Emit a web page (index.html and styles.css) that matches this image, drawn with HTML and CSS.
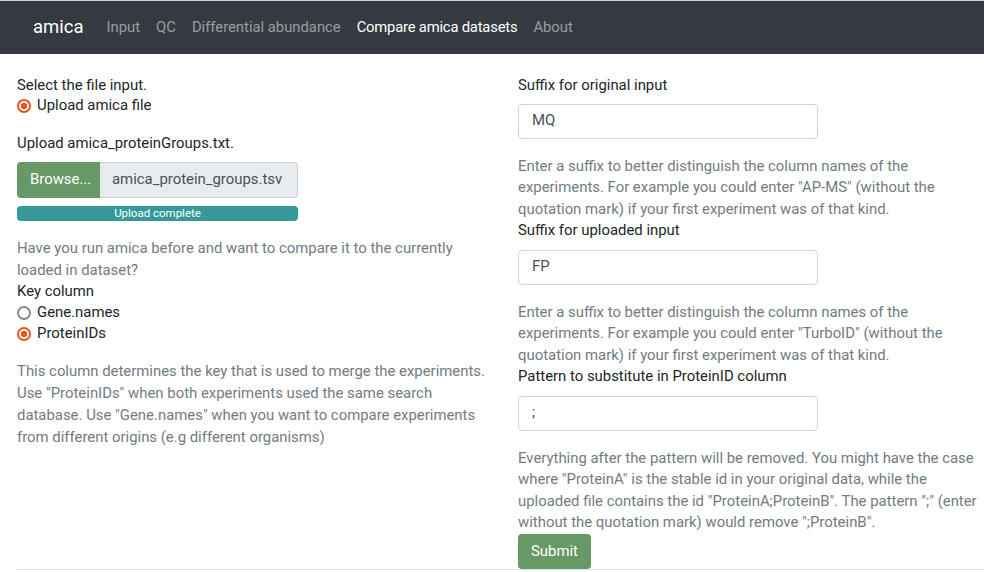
FILE: index.html
```html
<!DOCTYPE html>
<html lang="en">
<head>
<meta charset="utf-8">
<title>amica</title>
<link rel="stylesheet" href="styles.css">
</head>
<body>
<nav class="navbar">
  <span class="brand">amica</span>
  <ul class="nav">
    <li><a>Input</a></li>
    <li><a>QC</a></li>
    <li><a>Differential abundance</a></li>
    <li><a class="active">Compare amica datasets</a></li>
    <li><a>About</a></li>
  </ul>
</nav>
<main class="page">
  <section class="col col-left">
    <div class="group">
      <div class="label">Select the file input.</div>
      <label class="radio first"><span class="dot checked"></span>Upload amica file</label>
    </div>
    <div class="group">
      <div class="label gap">Upload amica_proteinGroups.txt.</div>
      <div class="file-input">
        <span class="browse">Browse...</span>
        <span class="filename">amica_protein_groups.tsv</span>
      </div>
      <div class="progress">Upload complete</div>
    </div>
    <p class="help">Have you run amica before and want to compare it to the currently loaded in dataset?</p>
    <div class="group key">
      <div class="label">Key column</div>
      <label class="radio first"><span class="dot"></span>Gene.names</label>
      <label class="radio"><span class="dot checked"></span>ProteinIDs</label>
    </div>
    <p class="help">This column determines the key that is used to merge the experiments. Use "ProteinIDs" when both experiments used the same search database. Use "Gene.names" when you want to compare experiments from different origins (e.g different organisms)</p>
  </section>
  <section class="col col-right">
    <div class="label gap">Suffix for original input</div>
    <div class="text-input">MQ</div>
    <p class="help">Enter a suffix to better distinguish the column names of the experiments. For example you could enter "AP-MS" (without the quotation mark) if your first experiment was of that kind.</p>
    <div class="label gap">Suffix for uploaded input</div>
    <div class="text-input">FP</div>
    <p class="help">Enter a suffix to better distinguish the column names of the experiments. For example you could enter "TurboID" (without the quotation mark) if your first experiment was of that kind.</p>
    <div class="label gap">Pattern to substitute in ProteinID column</div>
    <div class="text-input">;</div>
    <p class="help">Everything after the pattern will be removed. You might have the case where "ProteinA" is the stable id in your original data, while the uploaded file contains the id "ProteinA;ProteinB". The pattern ";" (enter without the quotation mark) would remove ";ProteinB".</p>
    <button class="btn">Submit</button>
  </section>
</main>
<hr class="rule">
</body>
</html>
```
FILE: styles.css
```css
html, body {
  margin: 0;
  padding: 0;
  background: #fff;
}
body {
  font-family: Roboto, "Liberation Sans", sans-serif;
  font-size: 14.9px;
  line-height: 21.6px;
  color: #212529;
  overflow: hidden;
  width: 984px;
  height: 572px;
}
.navbar {
  display: flex;
  align-items: center;
  height: 53px;
  background: #343a40;
  border-top: 1px solid #cfcfd2;
  padding-left: 33px;
}
.brand {
  color: #fff;
  font-size: 18.5px;
  margin-right: 15px;
}
.nav {
  display: flex;
  list-style: none;
  margin: 0;
  padding: 0;
  font-size: 14.8px;
}
.nav a {
  display: block;
  padding: 0 8px;
  color: rgba(255,255,255,0.5);
}
.nav a.active {
  color: #fff;
  letter-spacing: -0.2px;
}
.page {
  display: grid;
  grid-template-columns: 470px 466px;
  column-gap: 31px;
  padding: 20.5px 0 0 17px;
}
.col {
  display: flex;
  flex-direction: column;
  align-items: flex-start;
}
.group {
  margin-bottom: 16px;
}
.group.key {
  margin-bottom: 15px;
}
.col-left .help {
  line-height: 22px;
}
.label {
  color: #212529;
}
.label.gap {
  margin-bottom: 8px;
}
.col-right .label.gap {
  margin-bottom: 7.6px;
}
.radio {
  display: flex;
  align-items: center;
}
.radio.first {
  margin-top: -1px;
}
.dot {
  box-sizing: border-box;
  width: 14px;
  height: 14px;
  border-radius: 50%;
  border: 2px solid #8a8a8e;
  margin-right: 6px;
  background: #fff;
}
.dot.checked {
  border: 2px solid #e95420;
  background: radial-gradient(circle, #e95420 0 3px, #fff 3.5px);
}
.file-input {
  display: flex;
  width: 281px;
  height: 36px;
}
.browse {
  display: flex;
  align-items: center;
  background: #669966;
  color: #fff;
  padding: 0 13px;
  border-radius: 4px 0 0 4px;
  width: 57px;
}
.filename {
  flex: 1;
  display: flex;
  align-items: center;
  background: #e9ecef;
  border: 1px solid #ced4da;
  border-left: none;
  border-radius: 0 4px 4px 0;
  padding-left: 12px;
  color: #495057;
}
.progress {
  width: 281px;
  height: 15px;
  margin-top: 8px;
  background: #35999a;
  border-radius: 4px;
  color: #fff;
  font-size: 11.5px;
  line-height: 15px;
  text-align: center;
}
.help {
  margin: 0;
  color: #737b82;
}
.text-input {
  box-sizing: border-box;
  width: 300px;
  height: 35px;
  border: 1px solid #ced4da;
  border-radius: 4px;
  padding-left: 13px;
  display: flex;
  align-items: center;
  color: #495057;
  margin-bottom: 17px;
}
.btn {
  font: inherit;
  background: #669966;
  color: #fff;
  border: none;
  border-radius: 4px;
  height: 35px;
  padding: 0 13px;
}
.rule {
  margin: 0 0 0 17px;
  border: none;
  border-top: 1px solid #dee2e6;
}
```
